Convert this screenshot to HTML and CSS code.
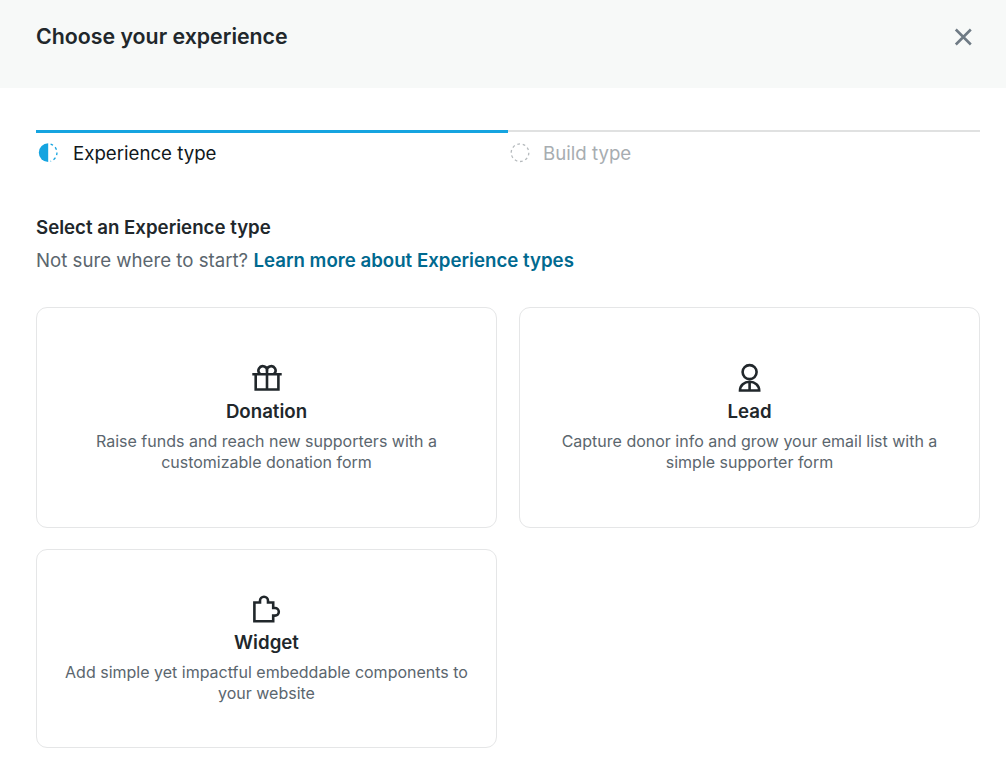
FILE: index.html
```html
<!DOCTYPE html>
<html lang="en">
<head>
    <meta charset="UTF-8">
    <meta name="viewport" content="width=device-width, initial-scale=1.0">
    <title>Choose your experience</title>
    <link rel="stylesheet" href="styles.css">
</head>
<body>
    <header class="modal-header">
        <h1>Choose your experience</h1>
        <button class="close" type="button" aria-label="Close">
            <svg width="18" height="18" viewBox="0 0 18 18">
                <path d="M1.8 1.5L16.8 16.5M16.8 1.5L1.8 16.5"/>
            </svg>
        </button>
    </header>
    <main>
        <ol class="steps">
            <li class="step active">
                <svg width="20" height="20" viewBox="0 0 20 20">
                    <path class="half" d="M10.2 .3A9.4 9.4 0 0 0 10.2 19.1Z"/>
                    <path class="dashes" d="M12.6 1.1A9 9 0 0 1 12.6 18.3"/>
                </svg>
                <span>Experience type</span>
            </li>
            <li class="step">
                <svg width="20" height="20" viewBox="0 0 20 20">
                    <circle class="dashes" cx="10" cy="9.7" r="8.8"/>
                </svg>
                <span>Build type</span>
            </li>
        </ol>

        <h2>Select an Experience type</h2>
        <p class="hint">Not sure where to start? <a href="#">Learn more about Experience types</a></p>

        <div class="cards">
            <button class="card" type="button">
                <svg class="icon" width="32" height="32" viewBox="0 0 32 32">
                    <path d="M1.3 12.3H30.7M4.7 12V27.5H27.4V12M16 11V27.3M16 12V9.5A4.3 4.3 0 1 0 9.2 12M16 9.5A4.3 4.3 0 1 1 22.8 12"/>
                </svg>
                <strong>Donation</strong>
                <span>Raise funds and reach new supporters with a customizable donation form</span>
            </button>
            <button class="card" type="button">
                <svg class="icon" width="32" height="32" viewBox="0 0 32 32">
                    <circle cx="15.6" cy="10.1" r="7"/>
                    <path d="M6 28.5C6 23.2 10.2 19.8 15.6 19.8S25.2 23.2 25.2 28.5ZM15.6 20.5V28"/>
                </svg>
                <strong>Lead</strong>
                <span>Capture donor info and grow your email list with a simple supporter form</span>
            </button>
            <button class="card" type="button">
                <svg class="icon" width="32" height="32" viewBox="0 0 32 32">
                    <path d="M3.4 9.5H9V7.8A4 4 0 0 1 17 7.8V9.5H22.2V15H24A3.8 3.8 0 0 1 24 22.6H22.2V28.2H3.4Z"/>
                </svg>
                <strong>Widget</strong>
                <span>Add simple yet impactful embeddable components to your website</span>
            </button>
        </div>
    </main>
</body>
</html>
```
FILE: styles.css
```css
* {
    box-sizing: border-box;
}
body {
    font-family: Inter, sans-serif;
    margin: 0;
    background: #fff;
    color: #21272b;
}
h1, h2, p, ol {
    margin: 0;
    padding: 0;
}
.modal-header {
    display: flex;
    justify-content: space-between;
    align-items: flex-start;
    height: 88px;
    padding: 22px 34px 0 36px;
    background: #f7f9f8;
}
h1 {
    font-size: 21.33px;
    line-height: 28px;
    font-weight: 600;
}
.close {
    display: flex;
    padding: 6px 0;
    border: none;
    background: none;
    cursor: pointer;
}
.close svg {
    fill: none;
    stroke: #6f7b85;
    stroke-width: 2.6;
}
main {
    padding: 42px 26px 26px 36px;
}
.steps {
    display: flex;
    list-style: none;
}
.step {
    flex: 1;
    display: flex;
    align-items: flex-start;
    gap: 13px;
    height: 46px;
    padding: 12px 0 0 2px;
    border-top: 2px solid #e0e1e1;
    color: #a7adb1;
    font-size: 18.67px;
    line-height: 20px;
}
.step.active {
    gap: 15px;
    padding-top: 11px;
    border-top: 3px solid #15a4e0;
    color: #101820;
}
.step svg {
    margin-top: -1px;
}
.dashes {
    fill: none;
    stroke: #b5babd;
    stroke-width: 1.3;
    stroke-dasharray: 2.7 2.8;
}
.active .dashes {
    stroke: #15a4e0;
}
.half {
    fill: #15a4e0;
}
h2 {
    margin-top: 39px;
    font-size: 18.67px;
    line-height: 26px;
    font-weight: 600;
}
.hint {
    margin-top: 7px;
    color: #5b666e;
    font-size: 18.67px;
    line-height: 26px;
}
.hint a {
    color: #00698f;
    font-weight: 600;
    text-decoration: none;
}
.cards {
    display: grid;
    grid-template-columns: 1fr 1fr;
    grid-template-rows: 221px 199.4px;
    gap: 21px 22px;
    margin-top: 33px;
}
.card {
    display: flex;
    flex-direction: column;
    align-items: center;
    justify-content: center;
    padding: 0 28px;
    border: 1px solid #e5e6e7;
    border-radius: 11px;
    background: #fff;
    color: #21272b;
    font-family: inherit;
    cursor: pointer;
}
.icon {
    fill: none;
    stroke: #21272b;
    stroke-width: 2.6;
}
.card strong {
    margin-top: 5px;
    font-size: 18.67px;
    line-height: 26px;
    font-weight: 600;
}
.card span {
    margin-top: 6px;
    color: #5b666e;
    font-size: 16px;
    line-height: 21.4px;
}
```
